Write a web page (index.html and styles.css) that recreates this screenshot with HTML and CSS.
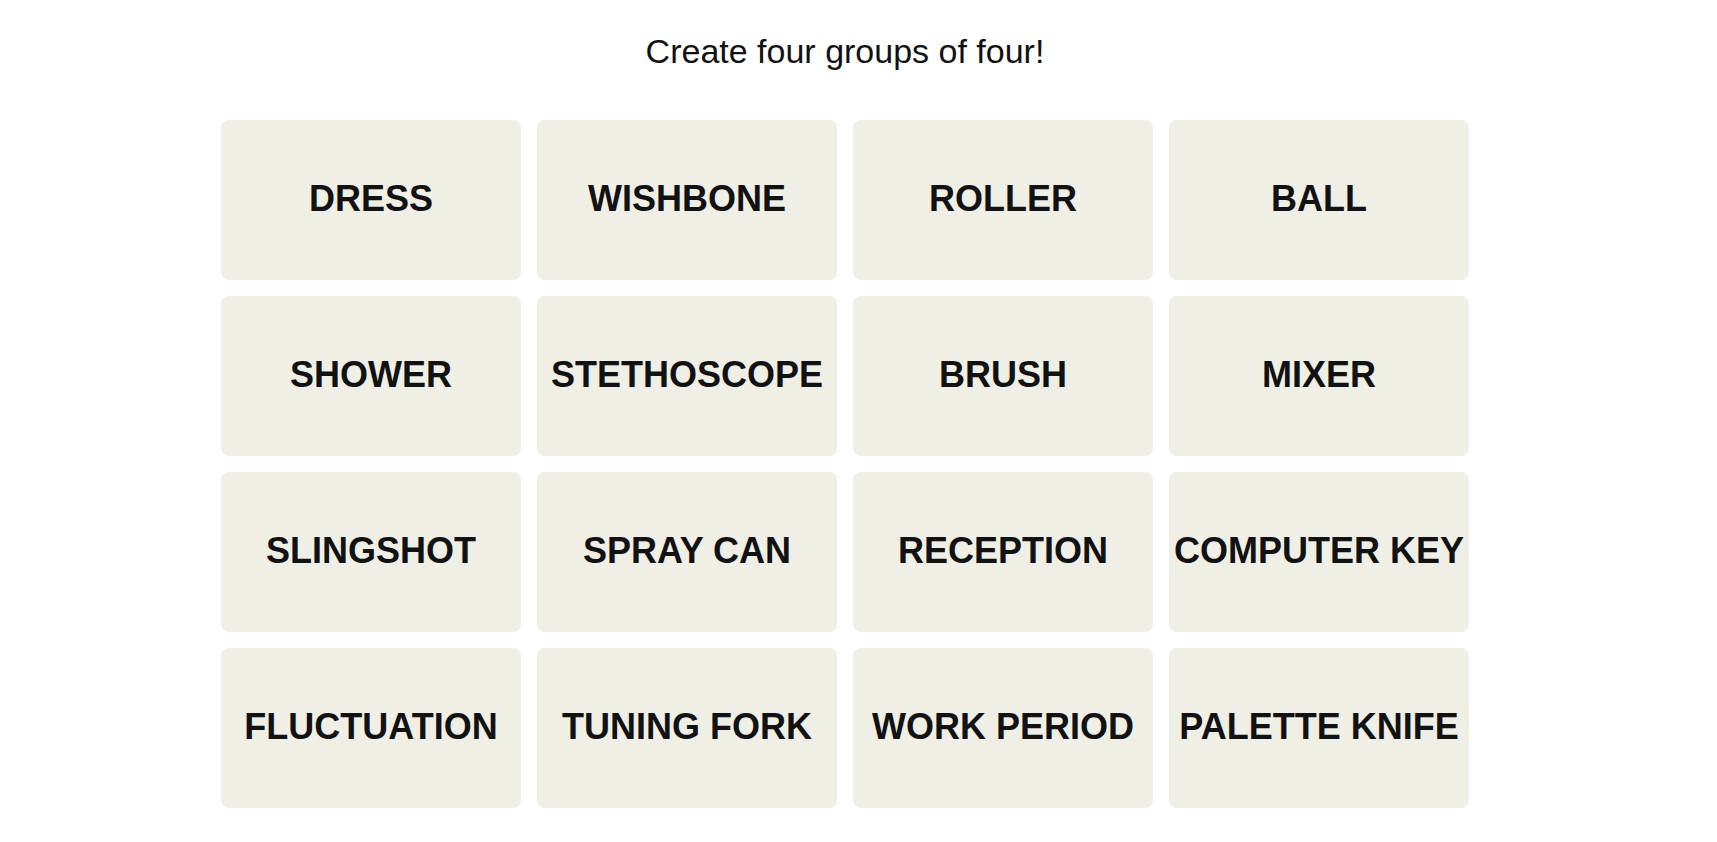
FILE: index.html
```html
<!DOCTYPE html>
<html lang="en">
<head>
<meta charset="utf-8">
<title>Connections</title>
<link rel="stylesheet" href="styles.css">
</head>
<body>
<main class="page">
  <p class="title">Create four groups of four!</p>
  <div class="board">
    <button class="tile">DRESS</button>
    <button class="tile">WISHBONE</button>
    <button class="tile">ROLLER</button>
    <button class="tile">BALL</button>
    <button class="tile">SHOWER</button>
    <button class="tile">STETHOSCOPE</button>
    <button class="tile">BRUSH</button>
    <button class="tile">MIXER</button>
    <button class="tile">SLINGSHOT</button>
    <button class="tile">SPRAY CAN</button>
    <button class="tile">RECEPTION</button>
    <button class="tile">COMPUTER KEY</button>
    <button class="tile">FLUCTUATION</button>
    <button class="tile">TUNING FORK</button>
    <button class="tile">WORK PERIOD</button>
    <button class="tile">PALETTE KNIFE</button>
  </div>
</main>
</body>
</html>
```
FILE: styles.css
```css
html, body {
  margin: 0;
  padding: 0;
  background: #ffffff;
}
.page {
  width: 1248px;
  padding: 32px 0 0 221px;
  font-family: "Liberation Sans", Arial, sans-serif;
  color: #121212;
}
.title {
  margin: 0 0 49px;
  font-size: 34px;
  line-height: 39px;
  font-weight: 400;
  text-align: center;
}
.board {
  display: grid;
  grid-template-columns: repeat(4, 300px);
  grid-auto-rows: 160px;
  gap: 16px;
}
.tile {
  display: flex;
  align-items: center;
  justify-content: center;
  border: none;
  border-radius: 8px;
  background: #efefe6;
  color: #121212;
  font-family: "Liberation Sans", Arial, sans-serif;
  font-size: 36px;
  font-weight: 700;
  line-height: 40px;
  padding: 0 0 3px;
  white-space: nowrap;
  cursor: pointer;
}
```
